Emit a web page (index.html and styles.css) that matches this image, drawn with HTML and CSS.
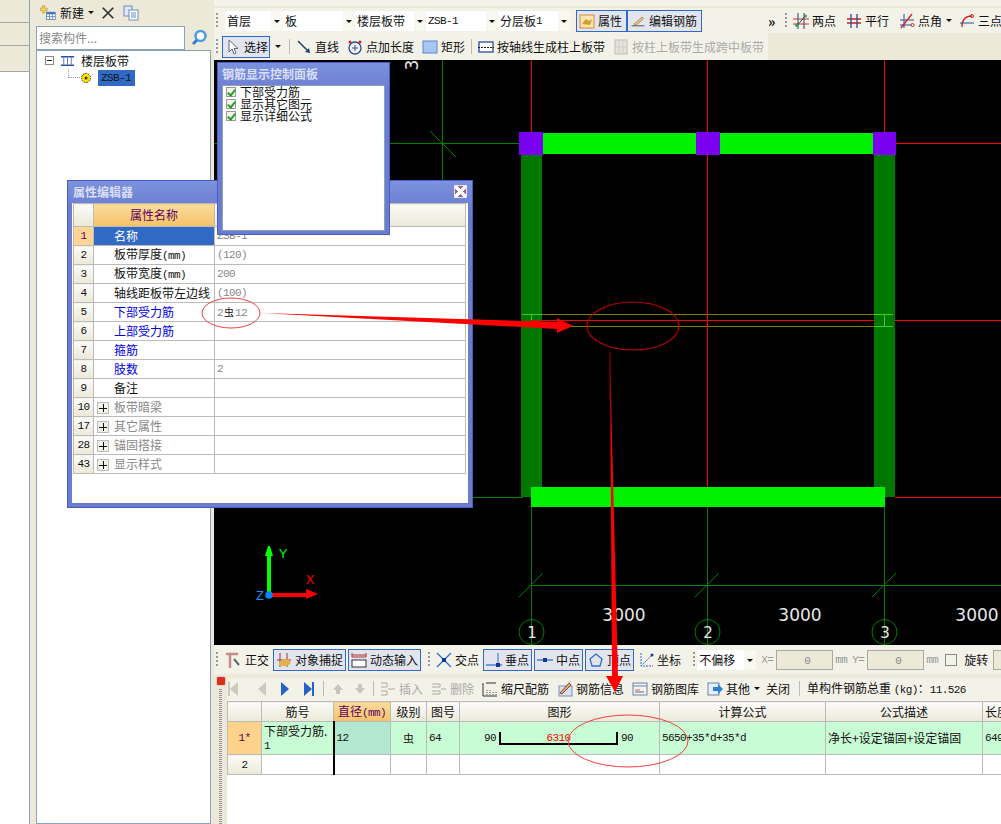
FILE: index.html
```html
<!DOCTYPE html>
<html lang="en">
<head>
    <meta charset="UTF-8">
    <title>钢筋 板带</title>
    <link rel="stylesheet" href="styles.css">
</head>
<body>

    <!-- Far left strip -->
    <div class="strip">
        <div class="strip-tab"></div>
        <div class="strip-tab"></div>
        <div class="strip-tab strip-tab-last"></div>
    </div>

    <!-- Component tree -->
    <div class="tree-panel">
        <div class="tree-tools">
            <svg class="ic" viewBox="0 0 20 20"><path d="M3 1h3v3h3v3H6v3H3V7H0V4h3z" fill="#f3d25c" stroke="#b08a20" stroke-width=".7"/><rect x="8" y="9" width="11" height="9" fill="#fff" stroke="#5b7fb8"/><rect x="8" y="9" width="11" height="2.5" fill="#3f6fb5"/><path d="M12 11v7M15.500 11v7M8 14.500h11" stroke="#5b7fb8"/></svg>
            <span class="tree-new">新建</span>
            <span class="caret"></span>
            <svg class="ic tree-x" viewBox="0 0 16 16"><path d="M2 2l12 12M14 2L2 14" stroke="#333" stroke-width="2"/></svg>
            <svg class="ic tree-copy" viewBox="0 0 16 16"><rect x="1" y="1" width="8" height="10" fill="#dfe9f8" stroke="#6a8cc0"/><rect x="6" y="5" width="9" height="10" fill="#fff" stroke="#6a8cc0"/><path d="M8 8h5M8 10h5M8 12h5" stroke="#6a8cc0"/></svg>
        </div>
        <div class="tree-search">
            <div class="search-box">搜索构件...</div>
            <svg class="search-ic" viewBox="0 0 18 18"><circle cx="10.500" cy="7" r="5" fill="#fff" stroke="#4b9be0" stroke-width="2.500"/><path d="M7 11l-4 4" stroke="#2f7fd0" stroke-width="3"/></svg>
        </div>
        <div class="tree-body">
            <div class="tree-row">
                <span class="tree-minus"></span>
                <svg class="tree-ic" viewBox="0 0 16 12"><path d="M1 1.500h14M1 10.500h14" stroke="#2d4fa5" stroke-width="1.500"/><path d="M4 2v8M8 2v8M12 2v8" stroke="#5c7bc4"/></svg>
                <span>楼层板带</span>
            </div>
            <div class="tree-row tree-child">
                <span class="tree-dots"></span>
                <svg class="tree-leaf" viewBox="0 0 12 12"><circle cx="6" cy="6" r="4.500" fill="#ffe600" stroke="#333" stroke-dasharray="1.500 1"/><circle cx="6" cy="6" r="1.500" fill="#333"/></svg>
                <span class="tree-sel lat">ZSB-1</span>
            </div>
        </div>
    </div>

    <div class="main">
        <div class="cut-bar"></div>

        <!-- Floor selectors -->
        <div class="toolbar row-one">
            <span class="grip"></span>
            <span class="pick pick-a">首层<i></i></span>
            <span class="pick pick-b">板<i></i></span>
            <span class="pick pick-c">楼层板带<i></i></span>
            <span class="pick pick-d"><b class="lat">ZSB-1</b><i></i></span>
            <span class="pick pick-e">分层板<b class="lat">1</b><i></i></span>
            <span class="tool on tool-attr">
                <svg class="ic" viewBox="0 0 16 16"><rect x="1" y="2" width="14" height="13" fill="#fbe3b4" stroke="#d98b2b"/><path d="M3 11l4-5 3 2 3-2-2 6z" fill="#c9a12c"/></svg>属性</span>
            <span class="tool on tool-edit">
                <svg class="ic" viewBox="0 0 20 16"><path d="M2 14h16" stroke="#333"/><path d="M5 12L15 3l2 2-9 8z" fill="#e8c97a" stroke="#7a5a20" stroke-width=".7"/></svg>编辑钢筋</span>
            <span class="more">»</span>
            <span class="grip grip-draw"></span>
            <span class="tool">
                <svg class="ic" viewBox="0 0 16 16"><path d="M0 6h16M0 11h16" stroke="#c33"/><path d="M5 0v16M11 0v16" stroke="#246"/><path d="M3 14L13 2" stroke="#246"/><circle cx="3.500" cy="12" r="1.500" fill="#3a3"/><circle cx="12.500" cy="3" r="1.500" fill="#3a3"/></svg>两点</span>
            <span class="tool">
                <svg class="ic" viewBox="0 0 16 16"><path d="M1 6h14M1 10h14" stroke="#c22" stroke-width="1.300"/><path d="M5 1v14M11 1v14" stroke="#2a4a9a" stroke-width="1.300"/></svg>平行</span>
            <span class="tool">
                <svg class="ic" viewBox="0 0 16 16"><path d="M1 7h14M1 12h11" stroke="#2a4a9a"/><path d="M5 1v14" stroke="#2a4a9a"/><path d="M2 15L13 1" stroke="#c22" stroke-width="1.300"/><circle cx="13.500" cy="12" r="1.500" fill="none" stroke="#c22"/></svg>点角<span class="caret"></span></span>
            <span class="tool tool-last">
                <svg class="ic" viewBox="0 0 16 16"><path d="M3 14C3 6 7 3 13 3" fill="none" stroke="#c22" stroke-width="1.300"/><path d="M1 10h14" stroke="#2a4a9a"/><circle cx="13" cy="3" r="1.500" fill="none" stroke="#c22"/></svg>三点</span>
        </div>

        <!-- Draw tools -->
        <div class="toolbar row-two">
            <span class="grip"></span>
            <span class="tool on tool-pick">
                <svg class="ic" viewBox="0 0 16 16"><path d="M4 1v12l3-3 2 5 2-1-2-4.500h4z" fill="#fff" stroke="#667"/></svg>选择</span>
            <span class="caret caret-pick"></span>
            <span class="sep"></span>
            <span class="tool">
                <svg class="ic" viewBox="0 0 16 16"><path d="M2 2l11 11" stroke="#246" stroke-width="1.500"/><path d="M14 14l-5-1 4-4z" fill="#246"/></svg>直线</span>
            <span class="tool">
                <svg class="ic" viewBox="0 0 16 16"><circle cx="8" cy="9" r="6" fill="none" stroke="#2a4a9a" stroke-width="1.300"/><path d="M5 9h6M8 6v6" stroke="#2a4a9a"/><circle cx="3" cy="3" r="1.500" fill="#c22"/><circle cx="13" cy="3" r="1.500" fill="#c22"/></svg>点加长度</span>
            <span class="tool">
                <svg class="ic" viewBox="0 0 16 16"><rect x="1" y="2" width="14" height="12" fill="#a9c6f2" stroke="#5c86c8"/></svg>矩形</span>
            <span class="sep sep-near"></span>
            <span class="tool">
                <svg class="ic" viewBox="0 0 16 16"><rect x="1" y="3" width="14" height="10" fill="#fff" stroke="#2a4a9a" stroke-width="1.300"/><path d="M0 8.500h16" stroke="#222" stroke-dasharray="2 1"/></svg>按轴线生成柱上板带</span>
            <span class="tool off">
                <svg class="ic" viewBox="0 0 16 16"><rect x="2" y="1" width="12" height="14" fill="#e6e4da" stroke="#bbb"/><path d="M6 1v14M10 1v14M2 8h12" stroke="#ccc"/></svg>按柱上板带生成跨中板带</span>
        </div>

        <!-- Drawing area -->
        <div class="canvas">
            <svg class="cad" viewBox="214 60 787 585">
                <g stroke="#008000" fill="none">
                    <path d="M214.500 143.500H520M442.500 60V180M430 131l26 26M473 497.500h50"/>
                    <path d="M531.500 507V645M707.500 507V645M884.500 507V645M531 585.500H1001"/>
                    <path d="M519 597l24-24M695 597l24-24M872 597l24-24"/>
                    <circle cx="531.500" cy="632" r="12.500"/>
                    <circle cx="707.500" cy="632" r="12.500"/>
                    <circle cx="884.500" cy="632" r="12.500"/>
                </g>
                <g stroke="#f00" fill="none">
                    <path d="M531.500 60V132M707.500 60V132M884.500 60V132M707.500 155V487M896 143.500H1001M895 497.500H1001"/>
                </g>
                <rect class="col" x="521" y="142" width="21" height="355"/>
                <rect class="col" x="874" y="142" width="21" height="355"/>
                <rect class="beam" x="543" y="133" width="331" height="21"/>
                <rect class="beam" x="531" y="487" width="354" height="20"/>
                <rect class="post" x="519" y="132" width="24" height="23"/>
                <rect class="post" x="696" y="132" width="24" height="23"/>
                <rect class="post" x="873" y="132" width="23" height="23"/>
                <path d="M522 314.500H893M522 326.500H893" stroke="#808000" fill="none"/>
                <path d="M522 314.500h20M874 314.500h19M874 326.500h19M531.500 314v7M884.500 314v12" stroke="#3ccc20" fill="none"/>
                <path d="M531 320.500H874M895 320.500H1001M707.500 303V340" stroke="#f00" fill="none"/>
                <ellipse cx="633" cy="326" rx="46" ry="24" fill="none" stroke="#b80000" stroke-width="1.200"/>
                <text class="dim" x="624" y="621">3000</text>
                <text class="dim" x="800" y="621">3000</text>
                <text class="dim" x="977" y="621">3000</text>
                <text class="dim bub" x="532" y="638">1</text>
                <text class="dim bub" x="708" y="638">2</text>
                <text class="dim bub" x="885" y="638">3</text>
                <text class="dim" transform="translate(418 65) rotate(-90)">3</text>
                <!-- UCS axes -->
                <path d="M267 556h4v37h-4zM265 556l3-10h2l3 10z" fill="#00ff00"/>
                <path d="M272 593h35v4h-35zM306 589l12 5-12 5z" fill="#f00"/>
                <circle cx="269" cy="595" r="3.800" fill="#0a84ff"/>
                <text class="axis axis-z" x="260" y="600">Z</text>
                <text class="axis axis-y" x="283" y="558">Y</text>
                <text class="axis axis-x" x="310" y="584">X</text>
            </svg>
        </div>

        <!-- Snap tools -->
        <div class="toolbar snap-bar">
            <span class="grip"></span>
            <span class="tool">
                <svg class="ic" viewBox="0 0 16 16"><path d="M0 2h12M4 2v14" stroke="#c98a8a" stroke-width="2.500"/><path d="M8 7l5 6" stroke="#667" stroke-width="2"/></svg>正交</span>
            <span class="tool on">
                <svg class="ic" viewBox="0 0 16 16"><path d="M4 1v14M11 1v14M1 8h14" stroke="#a33"/><path d="M3 11c3-5 9-5 11-2s-2 5-6 5-6-1-5-3z" fill="#e0b24a"/></svg>对象捕捉</span>
            <span class="tool on">
                <svg class="ic" viewBox="0 0 16 16"><path d="M1 1v4h14V1M1 3h14" fill="none" stroke="#a33"/><rect x="1" y="8" width="14" height="7" fill="#fff" stroke="#333"/></svg>动态输入</span>
            <span class="grip grip-snap"></span>
            <span class="tool">
                <svg class="ic" viewBox="0 0 16 16"><path d="M1 1l14 14M15 1L1 15" stroke="#2f6fd0" stroke-width="1.300"/><rect x="6" y="6" width="4" height="4" fill="#123a90"/></svg>交点</span>
            <span class="tool on">
                <svg class="ic" viewBox="0 0 16 16"><path d="M0 13h16" stroke="#2f6fd0" stroke-width="1.300"/><path d="M12 1v14" stroke="#2f6fd0"/><rect x="10" y="11" width="4" height="4" fill="#123a90"/></svg>垂点</span>
            <span class="tool on">
                <svg class="ic" viewBox="0 0 16 16"><path d="M0 8h16" stroke="#2f6fd0" stroke-width="1.300"/><rect x="6" y="6" width="4" height="4" fill="#123a90"/></svg>中点</span>
            <span class="tool on">
                <svg class="ic" viewBox="0 0 16 16"><path d="M8 2l6 5-2 7H4L2 7z" fill="none" stroke="#2f6fd0" stroke-width="1.300"/></svg>顶点</span>
            <span class="tool">
                <svg class="ic" viewBox="0 0 16 16"><path d="M3 1v13h12" fill="none" stroke="#2f6fd0" stroke-dasharray="2 1"/><path d="M3 14L14 3" stroke="#2f6fd0" stroke-dasharray="2 1"/><circle cx="14" cy="3" r="1.500" fill="#123a90"/></svg>坐标</span>
            <span class="grip grip-snap grip-wide"></span>
            <span class="pick pick-f">不偏移<i></i></span>
            <span class="spin-label lat">X=</span>
            <span class="spin lat">0</span>
            <span class="spin-unit lat">mm</span>
            <span class="spin-label spin-gap lat">Y=</span>
            <span class="spin lat">0</span>
            <span class="spin-unit lat">mm</span>
            <span class="check"></span>
            <span class="rotate">旋转</span>
            <span class="spin spin-end"></span>
        </div>

        <!-- Rebar table -->
        <div class="rebar">
            <div class="rebar-side">
                <span class="close-dot"></span>
                <span class="dot-grip"></span>
            </div>
            <div class="rebar-main">
                <div class="rebar-tools">
                    <span class="nav-ic nav-off nav-start"></span>
                    <span class="nav-ic nav-off nav-back"></span>
                    <span class="nav-ic nav-next"></span>
                    <span class="nav-ic nav-end"></span>
                    <span class="sep sep-far"></span>
                    <svg class="ic" viewBox="0 0 16 16"><path d="M8 3l5 6h-3v4H6V9H3z" fill="#c8c6bc"/></svg>
                    <svg class="ic" viewBox="0 0 16 16"><path d="M8 13L3 7h3V3h4v4h3z" fill="#c8c6bc"/></svg>
                    <span class="sep sep-near"></span>
                    <span class="tool off">
                        <svg class="ic" viewBox="0 0 16 16"><path d="M1 2h6v4H1M1 10h6v4H1M8 8h7" fill="none" stroke="#aaa"/></svg>插入</span>
                    <span class="tool off">
                        <svg class="ic" viewBox="0 0 16 16"><path d="M1 3h8v3H1M1 10h8v3H1M10 8h5" fill="none" stroke="#aaa"/></svg>删除</span>
                    <span class="tool">
                        <svg class="ic" viewBox="0 0 16 16"><path d="M1 2v13M4 2h10M1 15h14" stroke="#333"/><path d="M5 14V8M8 14V9M11 14v-4M14 14v-3" stroke="#555" stroke-dasharray="1 1"/></svg>缩尺配筋</span>
                    <span class="tool">
                        <svg class="ic" viewBox="0 0 16 16"><rect x="2" y="5" width="13" height="10" fill="#d8e4f6" stroke="#7a8fb0"/><path d="M3 12L12 2l2 2-9 9z" fill="#e0b24a" stroke="#845"/></svg>钢筋信息</span>
                    <span class="tool">
                        <svg class="ic" viewBox="0 0 16 16"><rect x="1" y="2" width="14" height="12" fill="#f4f4f0" stroke="#6a84ac"/><path d="M1 5h14" stroke="#6a84ac"/><path d="M3 9h5" stroke="#c66"/><path d="M3 11h9" stroke="#667"/></svg>钢筋图库</span>
                    <span class="tool">
                        <svg class="ic" viewBox="0 0 16 16"><rect x="1" y="2" width="11" height="12" fill="#e6eefb" stroke="#6a84ac"/><path d="M6 6h5V3l5 5-5 5v-3H6z" fill="#2f7fd8"/></svg>其他<span class="caret"></span></span>
                    <span class="tool tool-closeit">关闭</span>
                    <span class="sep"></span>
                    <span class="total">单构件钢筋总重 <b class="lat">(kg)</b>：<b class="lat">11.526</b></span>
                </div>
                <table class="rebar-grid">
                    <colgroup>
                        <col class="c-no"><col class="c-name"><col class="c-dia"><col class="c-level"><col class="c-fig">
                        <col class="c-shape"><col class="c-calc"><col class="c-desc"><col class="c-len">
                    </colgroup>
                    <tr class="rebar-head">
                        <th></th><th>筋号</th><th class="head-on">直径<b class="lat">(mm)</b></th><th>级别</th><th>图号</th>
                        <th>图形</th><th>计算公式</th><th>公式描述</th><th class="head-cut">长度</th>
                    </tr>
                    <tr class="rebar-one">
                        <td class="row-on lat">1*</td>
                        <td class="bar-name">下部受力筋.<br><b class="lat">1</b></td>
                        <td class="cell-on lat">12</td>
                        <td class="mid">虫</td>
                        <td class="lat">64</td>
                        <td>
                            <div class="shape">
                                <span class="lat">90</span>
                                <span class="shape-bar"><b class="lat">6310</b></span>
                                <span class="lat">90</span>
                            </div>
                        </td>
                        <td class="lat">5650+35*d+35*d</td>
                        <td>净长+设定锚固+设定锚固</td>
                        <td class="lat">649</td>
                    </tr>
                    <tr class="rebar-two">
                        <td class="row-num lat">2</td><td></td><td class="cell-dark"></td><td></td><td></td><td></td><td></td><td></td><td></td>
                    </tr>
                </table>
            </div>
        </div>
    </div>

    <!-- Property editor window -->
    <div class="win prop-win">
        <div class="win-title">属性编辑器<span class="win-close"></span></div>
        <div class="win-body">
            <table class="prop-grid">
                <colgroup><col class="p-no"><col class="p-name"><col></colgroup>
                <tr class="prop-head"><th></th><th class="prop-name-head">属性名称</th><th></th></tr>
                <tr><td class="num num-on lat">1</td><td class="pn pn-on">名称</td><td class="pv lat">ZSB-1</td></tr>
                <tr><td class="num lat">2</td><td class="pn">板带厚度<b class="lat">(mm)</b></td><td class="pv lat">(120)</td></tr>
                <tr><td class="num lat">3</td><td class="pn">板带宽度<b class="lat">(mm)</b></td><td class="pv lat">200</td></tr>
                <tr><td class="num lat">4</td><td class="pn">轴线距板带左边线</td><td class="pv lat">(100)</td></tr>
                <tr><td class="num lat">5</td><td class="pn blue">下部受力筋</td><td class="pv"><b class="lat">2</b><span class="steel">虫</span><b class="lat">12</b></td></tr>
                <tr><td class="num lat">6</td><td class="pn blue">上部受力筋</td><td class="pv"></td></tr>
                <tr><td class="num lat">7</td><td class="pn blue">箍筋</td><td class="pv"></td></tr>
                <tr><td class="num lat">8</td><td class="pn blue">肢数</td><td class="pv lat">2</td></tr>
                <tr><td class="num lat">9</td><td class="pn">备注</td><td class="pv"></td></tr>
                <tr><td class="num lat">10</td><td class="pg"><span class="plus"></span>板带暗梁</td><td class="pv"></td></tr>
                <tr><td class="num lat">17</td><td class="pg"><span class="plus"></span>其它属性</td><td class="pv"></td></tr>
                <tr><td class="num lat">28</td><td class="pg"><span class="plus"></span>锚固搭接</td><td class="pv"></td></tr>
                <tr><td class="num lat">43</td><td class="pg"><span class="plus"></span>显示样式</td><td class="pv"></td></tr>
            </table>
        </div>
    </div>

    <!-- Rebar display panel -->
    <div class="win show-win">
        <div class="win-title">钢筋显示控制面板</div>
        <div class="show-list">
            <div class="show-item"><span class="tick"></span>下部受力筋</div>
            <div class="show-item"><span class="tick"></span>显示其它图元</div>
            <div class="show-item"><span class="tick"></span>显示详细公式</div>
        </div>
    </div>

    <!-- Hand drawn marks over the screenshot -->
    <svg class="marks" viewBox="0 0 1001 824">
        <ellipse cx="231" cy="313" rx="29" ry="15" fill="none" stroke="#f04040"/>
        <path d="M261 313L557 322V318L573 326L557 333V329Z" fill="#f00"/>
        <ellipse cx="628" cy="741" rx="60" ry="26" fill="none" stroke="#f04040"/>
        <path d="M610 357L612 676H606L615 692L623 676H618Z" fill="#f00"/>
        <path d="M610 352V400" stroke="#900" fill="none"/>
    </svg>

</body>
</html>
```

FILE: styles.css
```css
* {
    margin: 0;
    padding: 0;
    box-sizing: border-box;
}

body {
    position: relative;
    display: flex;
    width: 1001px;
    height: 824px;
    overflow: hidden;
    background-color: #ece9d8;
    color: #111;
    font-family: "Noto Sans CJK SC", sans-serif;
    font-size: 12px;
    line-height: 14px;
}

b {
    font-weight: normal;
}

.lat {
    font-family: "Liberation Mono", monospace;
    font-size: 11px;
    letter-spacing: -0.6px;
}

.ic {
    flex: none;
    width: 16px;
    height: 16px;
}

.caret {
    display: inline-block;
    flex: none;
    width: 0;
    height: 0;
    margin-left: 4px;
    border-left: 3px solid transparent;
    border-right: 3px solid transparent;
    border-top: 3px solid #111;
}

/* Left strip */
.strip {
    flex: none;
    width: 30px;
    background-color: #fff;
    border-right: 1px solid #8aa3bd;
}

.strip-tab {
    height: 23px;
    background-color: #ece9d8;
    border-bottom: 1px solid #a9a79b;
}

.strip-tab-last {
    height: 26px;
}

/* Tree panel */
.tree-panel {
    display: flex;
    flex-direction: column;
    flex: none;
    width: 181px;
    margin-right: 3px;
    padding-left: 6px;
}

.tree-tools {
    display: flex;
    align-items: center;
    height: 25px;
    padding-left: 4px;
}

.tree-new {
    margin-left: 4px;
}

.tree-x {
    margin-left: 7px;
    width: 14px;
}

.tree-copy {
    margin-left: 8px;
}

.tree-search {
    display: flex;
    align-items: center;
    height: 25px;
}

.search-box {
    width: 149px;
    height: 24px;
    padding: 4px 2px;
    background-color: #fff;
    border: 1px solid #8aa3bd;
    color: #888;
}

.search-ic {
    width: 18px;
    height: 18px;
    margin-left: 5px;
}

.tree-body {
    flex: 1;
    padding-top: 1px;
    background-color: #fff;
    border: 1px solid #8aa3bd;
}

.tree-row {
    display: flex;
    align-items: center;
    height: 17px;
    padding-left: 8px;
}

.tree-minus {
    position: relative;
    width: 9px;
    height: 9px;
    border: 1px solid #888;
}

.tree-minus::after {
    content: "";
    position: absolute;
    top: 3px;
    left: 1px;
    width: 5px;
    height: 1px;
    background-color: #222;
}

.tree-ic {
    width: 15px;
    height: 12px;
    margin: 0 6px 0 6px;
}

.tree-child {
    padding-left: 31px;
}

.tree-dots {
    width: 12px;
    height: 9px;
    margin-top: -9px;
    border-left: 1px dotted #999;
    border-bottom: 1px dotted #999;
}

.tree-leaf {
    width: 12px;
    height: 12px;
}

.tree-sel {
    margin-left: 6px;
    padding: 1px 3px;
    width: 37px;
    background-color: #316ac5;
    color: #111;
}

/* Main column */
.main {
    display: flex;
    flex-direction: column;
    flex: none;
    width: 787px;
}

.cut-bar {
    height: 8px;
    background-color: #f4f3ea;
    border-bottom: 2px solid #ece9d8;
}

.toolbar {
    display: flex;
    align-items: center;
    flex: none;
    background-color: #f3f2e8;
}

.row-one {
    height: 25px;
    padding-left: 2px;
}

.row-two {
    height: 27px;
    margin-right: 233px;
    padding-left: 2px;
}

.grip {
    flex: none;
    width: 2px;
    height: 15px;
    margin-right: 4px;
    background-image: linear-gradient(#999 50%, transparent 50%);
    background-size: 2px 4px;
}

.pick {
    display: flex;
    align-items: center;
    flex: none;
    height: 20px;
    padding-left: 2px;
    background-color: #fff;
}

.pick i {
    position: relative;
    flex: none;
    width: 12px;
    height: 20px;
    margin-left: auto;
    background-color: #f8f7f0;
}

.pick i::after {
    content: "";
    position: absolute;
    top: 9px;
    left: 3px;
    border-left: 3px solid transparent;
    border-right: 3px solid transparent;
    border-top: 3px solid #111;
}

.pick-a { width: 58px; margin-left: 3px; }
.pick-b { width: 72px; }
.pick-c { width: 71px; }
.pick-d { width: 72px; }
.pick-e { width: 72px; }
.pick-f { width: 59px; }

.tool {
    display: flex;
    align-items: center;
    flex: none;
    gap: 3px;
    height: 22px;
    padding: 0 2px;
    margin-left: 6px;
    white-space: nowrap;
}

.tool .caret {
    margin-left: 1px;
}

.tool.on {
    margin-left: 0;
    padding: 0 2px;
    background-color: #e2e5ee;
    border: 1px solid #316ac5;
}

.tool.off {
    color: #aaa;
}

.tool-attr {
    width: 51px;
    margin-left: 6px !important;
}

.tool-edit {
    width: 75px;
}

.more {
    flex: none;
    width: 12px;
    margin-left: 66px;
    font-size: 14px;
    font-weight: bold;
}

.grip-draw {
    margin-left: 5px;
}

.grip-draw + .tool {
    margin-left: 0;
}

.tool-last {
    margin-left: 3px;
}

.row-two .tool {
    margin-left: 4px;
}

.row-two .tool-pick {
    width: 48px;
    margin-left: 0;
}

.caret-pick {
    margin-left: 5px;
}

.sep {
    flex: none;
    width: 1px;
    height: 15px;
    margin-left: 8px;
    background-color: #bbb;
}

.sep-near {
    margin-left: 4px;
}

/* Drawing */
.canvas {
    flex: none;
    height: 585px;
    background-color: #000;
}

.cad {
    display: block;
    width: 787px;
    height: 585px;
}

.col { fill: #007800; }
.beam { fill: #00f000; }
.post { fill: #7a00f0; }

.dim {
    fill: #e8e8e8;
    font-family: "DejaVu Sans", sans-serif;
    font-size: 17px;
    text-anchor: middle;
}

.bub {
    font-size: 15px;
}

.axis {
    font-family: "Liberation Sans", sans-serif;
    font-size: 13px;
    text-anchor: middle;
}

.axis-x { fill: #f00; }
.axis-y { fill: #00ff00; }
.axis-z { fill: #1e90ff; }

/* Bottom bars */
.snap-bar {
    height: 29px;
    padding-left: 2px;
}

.snap-bar .tool,
.snap-bar .tool.on {
    margin-left: 2px;
}

.grip-snap {
    margin-left: 7px;
    margin-right: 2px;
}

.grip-wide {
    margin-left: 10px;
}

.spin-label {
    margin-left: 5px;
    color: #999;
}

.spin-gap {
    margin-left: 5px;
}

.spin {
    flex: none;
    width: 57px;
    height: 20px;
    margin-left: 3px;
    padding: 3px 22px 0 0;
    background-color: #ece9d8;
    border: 1px solid #aaa99c;
    color: #888;
    text-align: right;
}

.spin-unit {
    margin-left: 2px;
    color: #999;
}

.spin-end {
    flex: 1;
    min-width: 0;
    width: 0;
    padding: 0;
    margin-left: 5px;
    border-right: 0;
}

.check {
    flex: none;
    width: 12px;
    height: 12px;
    margin-left: 7px;
    border: 1px solid #888;
}

.rotate {
    flex: none;
    margin-left: 7px;
    white-space: nowrap;
}

.rebar {
    display: flex;
    flex: 1;
    margin-top: 4px;
}

.rebar-side {
    display: flex;
    flex-direction: column;
    align-items: center;
    flex: none;
    width: 13px;
}

.close-dot {
    width: 10px;
    height: 10px;
    margin-top: -2px;
    background-color: #d8301c;
    border-radius: 2px;
    border: 1px solid #f6d0c8;
}

.dot-grip {
    flex: 1;
    width: 3px;
    margin-top: 3px;
    background-image: linear-gradient(#999 50%, transparent 50%);
    background-size: 3px 2px;
}

.rebar-main {
    display: flex;
    flex-direction: column;
    flex: 1;
    min-width: 0;
    background-color: #fff;
}

.rebar-tools {
    display: flex;
    align-items: center;
    flex: none;
    height: 23px;
    padding: 0 0 2px 2px;
    background-color: #f3f2e8;
}

.rebar-tools > .ic {
    margin-left: 6px;
}

.rebar-tools .tool {
    height: 20px;
    margin-left: 4px;
}

.rebar-tools .tool-closeit {
    margin-left: 2px;
}

.rebar-tools .sep {
    margin-left: 7px;
}

.rebar-tools .sep-far {
    margin-left: 11px;
}

.rebar-tools .sep-near {
    margin-left: 5px;
}

.nav-ic {
    position: relative;
    flex: none;
    width: 0;
    height: 0;
    margin-left: 15px;
    border-top: 7px solid transparent;
    border-bottom: 7px solid transparent;
    border-left: 8px solid #2463c8;
}

.nav-off {
    border-left: 0;
    border-right: 8px solid #ccc9bd;
}

.nav-start {
    margin-left: 1px;
}

.nav-start::before {
    content: "";
    position: absolute;
    top: -7px;
    left: -2px;
    width: 2px;
    height: 14px;
    background-color: #ccc9bd;
}

.nav-back {
    margin-left: 20px;
}

.nav-end::after {
    content: "";
    position: absolute;
    top: -7px;
    left: 0;
    width: 2px;
    height: 14px;
    background-color: #2463c8;
}

.total {
    flex: none;
    margin-left: 7px;
    white-space: nowrap;
}

.rebar-grid {
    flex: none;
    width: 774px;
    table-layout: fixed;
    border-collapse: collapse;
    background-color: #fff;
    border-top: 1px solid #8aa3bd;
    border-left: 1px solid #8aa3bd;
}

.c-no { width: 34px; }
.c-name { width: 72px; }
.c-dia { width: 57px; }
.c-level { width: 36px; }
.c-fig { width: 33px; }
.c-shape { width: 200px; }
.c-calc { width: 166px; }
.c-desc { width: 157px; }
.c-len { width: 19px; }

.rebar-grid th,
.rebar-grid td {
    padding: 0 2px;
    border: 1px solid #bbb;
    white-space: nowrap;
    overflow: hidden;
}

.rebar-grid th {
    height: 20px;
    background: linear-gradient(#fbfbf8, #ece9d8);
    font-weight: normal;
}

.rebar-grid th.head-on {
    background: linear-gradient(#fbdc9e, #f3c266);
    color: #600060;
}

.rebar-grid th.head-cut {
    text-align: left;
}

.rebar-one td {
    height: 33px;
    background-color: #c8fcd4;
}

.rebar-one td.row-on {
    background-color: #ffd28c;
    color: #600060;
    text-align: center;
}

.rebar-one td.cell-on {
    background-color: #b2e8d0;
    border-left: 2px solid #000;
}

.rebar-one td.bar-name {
    white-space: normal;
    line-height: 13px;
}

.rebar-two td {
    height: 20px;
}

.rebar-two td.row-num {
    background: linear-gradient(#fbfbf8, #ece9d8);
    text-align: center;
}

.rebar-two td.cell-dark {
    border-left: 2px solid #000;
}

.rebar-one td.mid {
    font-size: 11px;
    text-align: center;
}

.shape {
    display: flex;
    align-items: center;
    justify-content: center;
    gap: 3px;
    margin-left: -2px;
}

.shape-bar {
    width: 119px;
    height: 13px;
    border: 2px solid #000;
    border-top: 0;
    text-align: center;
    color: #f00;
}

.shape-bar .lat {
    display: block;
    line-height: 12px;
}

/* Floating windows */
.win {
    position: absolute;
    background: linear-gradient(#7b92de, #6a7bd0 30px);
    border: 1px solid #4a5cc0;
}

.win-title {
    position: relative;
    color: #d8dff6;
    font-weight: bold;
}

.prop-win {
    top: 180px;
    left: 67px;
    width: 406px;
    height: 328px;
    padding: 0 4px 4px;
}

.prop-win .win-title {
    height: 22px;
    padding: 4px 0 0 1px;
}

.win-close {
    position: absolute;
    top: 4px;
    right: 1px;
    width: 13px;
    height: 13px;
    background:
        linear-gradient(45deg, transparent 38%, #fff 38%, #fff 62%, transparent 62%),
        linear-gradient(-45deg, transparent 38%, #fff 38%, #fff 62%, transparent 62%),
        #a8607c;
    border: 1px solid #dfe3f5;
}

.win-body {
    height: 300px;
    padding-left: 1px;
    background-color: #fff;
}

.prop-grid {
    width: 393px;
    table-layout: fixed;
    border-collapse: collapse;
}

.p-no { width: 20px; }
.p-name { width: 121px; }

.prop-grid th,
.prop-grid td {
    height: 19px;
    border: 1px solid #bbb;
    white-space: nowrap;
    overflow: hidden;
}

.prop-head th {
    height: 23px;
    background: linear-gradient(#fbfbf8, #ece9d8);
    font-weight: normal;
}

.prop-head .prop-name-head {
    background: linear-gradient(#fbdc9e, #f3c266);
    color: #600060;
}

.num {
    background: linear-gradient(#fbfbf8, #ece9d8);
    text-align: center;
}

.prop-grid .num-on {
    background: #ffd595;
    color: #600060;
}

.pn {
    padding-left: 20px;
}

.pn-on {
    background-color: #316ac5;
    color: #fff;
}

.blue {
    color: #0000e0;
}

.pv {
    padding-left: 2px;
    color: #888;
}

.pg {
    padding-left: 3px;
    color: #888;
}

.plus {
    display: inline-block;
    width: 12px;
    height: 12px;
    margin-right: 5px;
    vertical-align: -2px;
    background:
        linear-gradient(#111, #111) no-repeat center / 8px 1px,
        linear-gradient(#111, #111) no-repeat center / 1px 8px,
        #f3f2e8;
    border: 1px solid #bbb;
}

.steel {
    margin: 0 1px;
    color: #111;
    font-size: 10px;
}

.show-win {
    top: 62px;
    left: 217px;
    width: 173px;
    height: 173px;
    padding: 0 4px 4px;
}

.show-win .win-title {
    height: 22px;
    padding: 4px 0 0 0;
}

.show-list {
    height: 146px;
    padding: 0 0 0 3px;
    background-color: #fff;
    border: 1px solid #8aa3bd;
}

.show-item {
    display: flex;
    align-items: center;
    height: 12px;
    line-height: 12px;
}

.tick {
    position: relative;
    flex: none;
    width: 10px;
    height: 10px;
    margin-right: 4px;
    background-color: #f4f4ec;
    border: 1px solid #999;
}

.tick::after {
    content: "";
    position: absolute;
    top: 0;
    left: 2px;
    width: 3px;
    height: 6px;
    border-right: 2px solid #22a022;
    border-bottom: 2px solid #22a022;
    transform: rotate(40deg);
}

.marks {
    position: absolute;
    top: 0;
    left: 0;
    width: 1001px;
    height: 824px;
    pointer-events: none;
}
```
